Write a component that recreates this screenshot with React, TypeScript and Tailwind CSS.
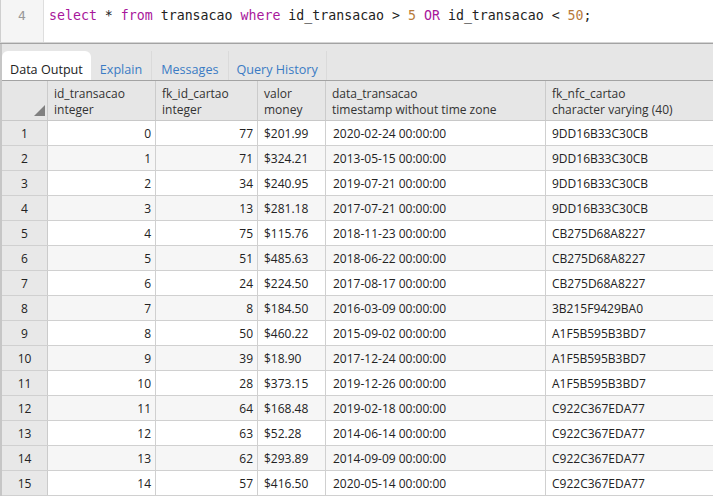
import React from 'react';

type Row = [number, number, string, string, string];

const ROWS: Row[] = [
  [0, 77, '$201.99', '2020-02-24 00:00:00', '9DD16B33C30CB'],
  [1, 71, '$324.21', '2013-05-15 00:00:00', '9DD16B33C30CB'],
  [2, 34, '$240.95', '2019-07-21 00:00:00', '9DD16B33C30CB'],
  [3, 13, '$281.18', '2017-07-21 00:00:00', '9DD16B33C30CB'],
  [4, 75, '$115.76', '2018-11-23 00:00:00', 'CB275D68A8227'],
  [5, 51, '$485.63', '2018-06-22 00:00:00', 'CB275D68A8227'],
  [6, 24, '$224.50', '2017-08-17 00:00:00', 'CB275D68A8227'],
  [7, 8, '$184.50', '2016-03-09 00:00:00', '3B215F9429BA0'],
  [8, 50, '$460.22', '2015-09-02 00:00:00', 'A1F5B595B3BD7'],
  [9, 39, '$18.90', '2017-12-24 00:00:00', 'A1F5B595B3BD7'],
  [10, 28, '$373.15', '2019-12-26 00:00:00', 'A1F5B595B3BD7'],
  [11, 64, '$168.48', '2019-02-18 00:00:00', 'C922C367EDA77'],
  [12, 63, '$52.28', '2014-06-14 00:00:00', 'C922C367EDA77'],
  [13, 62, '$293.89', '2014-09-09 00:00:00', 'C922C367EDA77'],
  [14, 57, '$416.50', '2020-05-14 00:00:00', 'C922C367EDA77'],
];

const HEADERS = [
  { name: 'id_transacao', type: 'integer', w: 'w-[108px]' },
  { name: 'fk_id_cartao', type: 'integer', w: 'w-[102px]' },
  { name: 'valor', type: 'money', w: 'w-[68px]' },
  { name: 'data_transacao', type: 'timestamp without time zone', w: 'w-[220px]' },
  { name: 'fk_nfc_cartao', type: 'character varying (40)', w: 'flex-1' },
];

const kw = 'text-[#a8179b]';
const num = 'text-[#b87a3a]';

export default function App() {
  return (
    <div className="w-[713px] h-[497px] overflow-hidden bg-white font-['Open_Sans',sans-serif] text-[#222]">
      {/* query editor */}
      <div className="flex h-[42px] border-l border-[#cfcfcf]">
        <div className="w-[43px] bg-[#f5f5f5] border-r border-[#dedede] text-center pt-[7px] leading-[18px] text-[13px] text-[#999] font-['DejaVu_Sans_Mono',monospace]">
          4
        </div>
        <div className="pl-[5px] pt-[7px] leading-[18px] text-[13.25px] font-['DejaVu_Sans_Mono',monospace] whitespace-pre text-[#222]">
          <span className={kw}>select</span> * <span className={kw}>from</span> transacao <span className={kw}>where</span> id_transacao &gt; <span className={num}>5</span> <span className={kw}>OR</span> id_transacao &lt; <span className={num}>50</span>;
        </div>
      </div>
      <div className="h-px bg-[#d4d4d4]" />
      <div className="h-px bg-[#a3a3a3]" />

      {/* result panel */}
      <div className="border-l-2 border-[#c6c6c6]">
        <div className="flex items-end h-[37px] bg-[#e6e6e6] border-b border-[#a3a3a3] text-[12.6px] leading-[18px]">
          <div className="h-[29px] pt-[10px] px-[8px] bg-white rounded-t-[6px]">Data Output</div>
          <div className="h-[29px] pt-[10px] px-[9px] border-r border-[#dadada] text-[#3a7bc4]">Explain</div>
          <div className="h-[29px] pt-[10px] px-[9px] border-r border-[#dadada] text-[#3a7bc4]">Messages</div>
          <div className="h-[29px] pt-[10px] px-[8px] border-r border-[#dadada] text-[#3a7bc4]">Query History</div>
        </div>

        <div className="text-[12px]">
          <div className="flex h-[40px] bg-[#e6e6e6] border-b border-[#c8c8c8] text-[#333]">
            <div className="w-[46px] border-r border-[#cbcbcb] relative">
              <svg className="absolute left-[32px] top-[24px]" width="11" height="11" viewBox="0 0 11 11">
                <polygon points="11,0 11,11 0,11" fill="#808080" />
              </svg>
            </div>
            {HEADERS.map((h, i) => (
              <div key={i} className={`${h.w} ${i < 4 ? 'border-r border-[#cbcbcb]' : ''} pl-[6px] pt-[5px] leading-[16px] whitespace-nowrap`}>
                <div>{h.name}</div>
                <div>{h.type}</div>
              </div>
            ))}
          </div>

          {ROWS.map((r, i) => (
            <div key={i} className={`flex h-[25px] border-b border-[#d0d0d0] leading-[25px] ${i % 2 ? 'bg-[#f6f6f6]' : 'bg-white'}`}>
              <div className="w-[46px] bg-[#e8e8e8] border-r border-[#cbcbcb] text-center">{i + 1}</div>
              <div className="w-[108px] border-r border-[#d0d0d0] text-right pr-[4px]">{r[0]}</div>
              <div className="w-[102px] border-r border-[#d0d0d0] text-right pr-[4px]">{r[1]}</div>
              <div className="w-[68px] border-r border-[#d0d0d0] pl-[6px]">{r[2]}</div>
              <div className="w-[220px] border-r border-[#d0d0d0] pl-[7px]">{r[3]}</div>
              <div className="flex-1 pl-[6px]">{r[4]}</div>
            </div>
          ))}
        </div>
      </div>
    </div>
  );
}
